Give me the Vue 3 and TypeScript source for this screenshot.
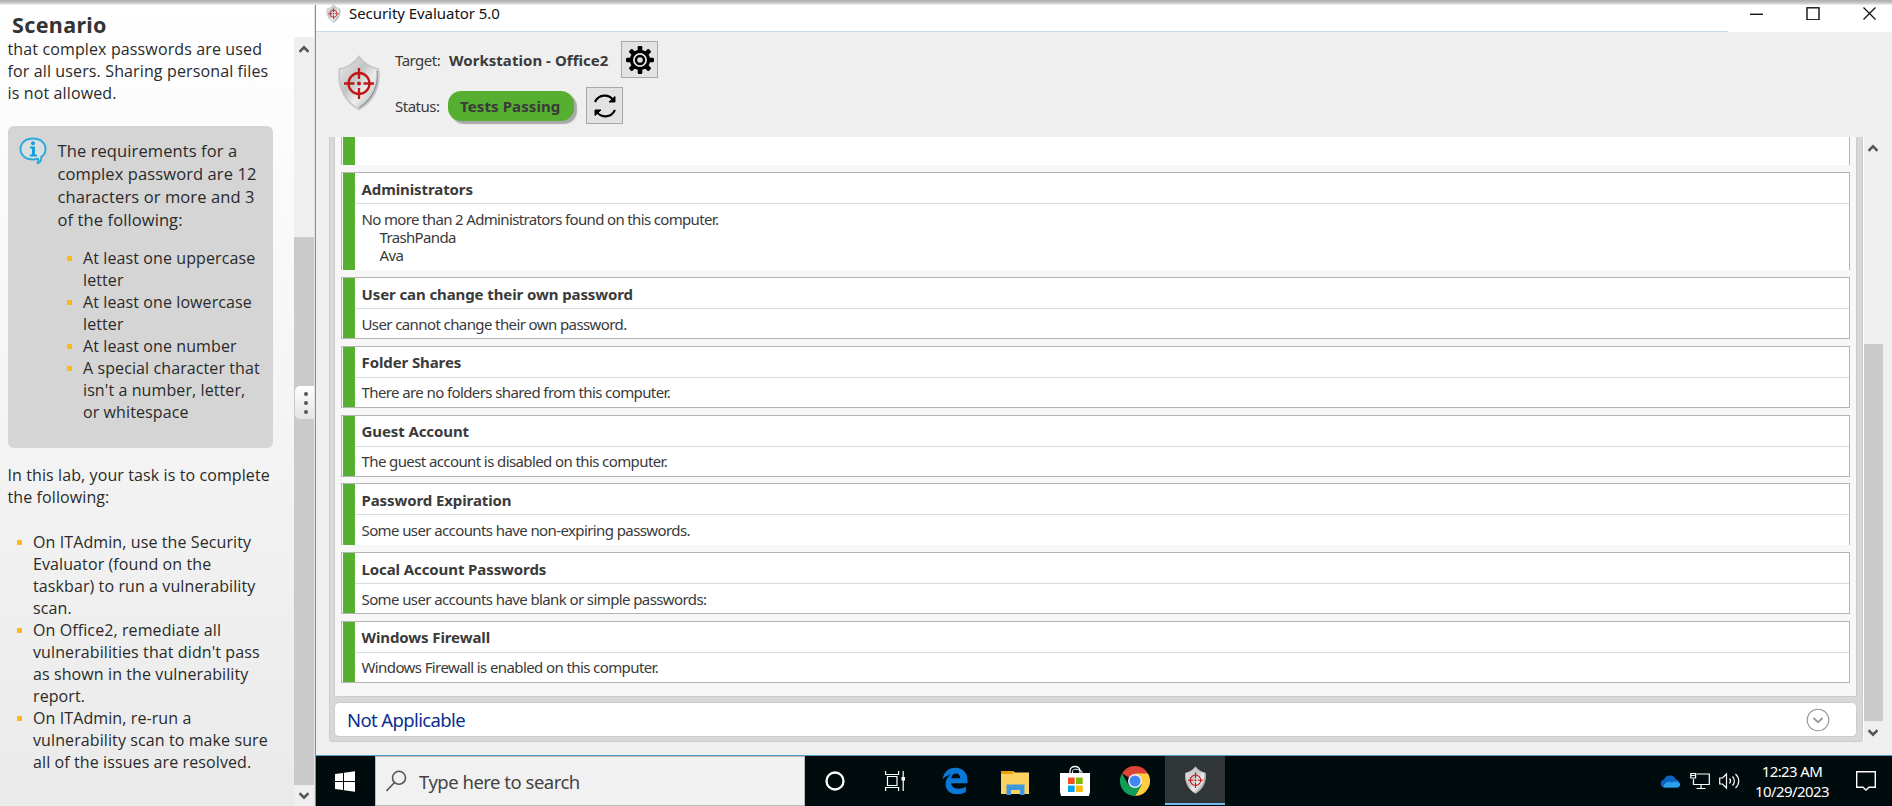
<script setup lang="ts">
interface Result {
  title: string
  lines: string[]
  indented?: string[]
  kind?: string
}

const results: Result[] = [
  {
    title: 'Administrators',
    lines: ['No more than 2 Administrators found on this computer.'],
    indented: ['TrashPanda', 'Ava'],
    kind: 'tall open',
  },
  { title: 'User can change their own password', lines: ['User cannot change their own password.'], kind: 'low' },
  { title: 'Folder Shares', lines: ['There are no folders shared from this computer.'] },
  { title: 'Guest Account', lines: ['The guest account is disabled on this computer.'], kind: 'close' },
  { title: 'Password Expiration', lines: ['Some user accounts have non-expiring passwords.'], kind: 'open low' },
  { title: 'Local Account Passwords', lines: ['Some user accounts have blank or simple passwords:'], kind: 'low' },
  { title: 'Windows Firewall', lines: ['Windows Firewall is enabled on this computer.'] },
]

const rules: string[][] = [
  ['At least one uppercase', 'letter'],
  ['At least one lowercase', 'letter'],
  ['At least one number'],
  ['A special character that', "isn't a number, letter,", 'or whitespace'],
]

const tasks: string[][] = [
  ['On ITAdmin, use the Security', 'Evaluator (found on the', 'taskbar) to run a vulnerability', 'scan.'],
  ['On Office2, remediate all', "vulnerabilities that didn't pass", 'as shown in the vulnerability', 'report.'],
  ['On ITAdmin, re-run a', 'vulnerability scan to make sure', 'all of the issues are resolved.'],
]

const teeth = [0, 45, 90, 135, 180, 225, 270, 315]
</script>

<template>
  <div class="screen">
    <svg width="0" height="0" class="defs">
      <defs>
        <linearGradient id="metal" x1="0" y1="0" x2="1" y2="1">
          <stop offset="0" stop-color="#eeeeee" />
          <stop offset=".4" stop-color="#c3c4c5" />
          <stop offset=".62" stop-color="#ededed" />
          <stop offset="1" stop-color="#9d9ea0" />
        </linearGradient>
        <symbol id="shield" viewBox="0 0 44 56">
          <path d="M22 1.500C18 8 9 13 2.500 14C0 32 8 47 22 54.500C36 47 44 32 41.500 14C35 13 26 8 22 1.500Z" fill="url(#metal)" stroke="#c3c4c6" stroke-width="1.500" />
          <path d="M40 15.500C42 31 35 45 22 52.500" fill="none" stroke="#8d8e92" stroke-width="1.200" />
          <g fill="none" stroke="#c01718" stroke-width="2.300">
            <circle cx="22" cy="28.500" r="10.500" />
            <path d="M22 13v11M22 33v11M7 28.500h10.500M26.500 28.500H37" />
          </g>
          <circle cx="22" cy="28.500" r="2" fill="#c01718" />
        </symbol>
      </defs>
    </svg>
    <div class="topbar"></div>
    <div class="body">
      <aside class="sidebar">
        <div class="doc">
          <h1>Scenario</h1>
          <p class="intro">that complex passwords are used<br />for all users. Sharing personal files<br />is not allowed.</p>
          <section class="note">
            <svg class="info" width="28" height="28" viewBox="0 0 28 28">
              <path d="M14 1.500C6.500 1.500 1.500 6 1.500 12S6.500 22.500 14 22.500c2 0 3.600-.2 5-.8 1 1.700.6 3.300-1 4.800 3-.8 4.700-3 4.200-6.500 2.700-1.800 4.300-4.700 4.300-8C26.500 6 21.500 1.500 14 1.500Z" fill="#dadfe0" stroke="#29a9dc" stroke-width="1.900" />
              <path d="M11 9.500h5v8h2v2h-7v-2h2v-6h-2z" fill="#169fd8" />
              <circle cx="14" cy="6.300" r="2" fill="#169fd8" />
            </svg>
            <div>
              <p class="req">The requirements for a<br />complex password are 12<br />characters or more and 3<br />of the following:</p>
              <ul class="rules">
                <li v-for="(r, i) in rules" :key="i"><div v-for="l in r" :key="l">{{ l }}</div></li>
              </ul>
            </div>
          </section>
          <p class="task">In this lab, your task is to complete<br />the following:</p>
          <ul class="tasks">
            <li v-for="(t, i) in tasks" :key="i"><div v-for="l in t" :key="l">{{ l }}</div></li>
          </ul>
        </div>
        <div class="side-scroll">
          <svg width="10" height="8" viewBox="0 0 10 8"><path d="M.5 6.800 5 2.300l4.500 4.500" fill="none" stroke="#555" stroke-width="2.600" /></svg>
          <div class="side-thumb"><div class="grip"><i></i><i></i><i></i></div></div>
          <svg width="10" height="8" viewBox="0 0 10 8"><path d="M.5 1.200 5 5.700l4.500-4.500" fill="none" stroke="#555" stroke-width="2.600" /></svg>
        </div>
      </aside>

      <main class="desktop">
        <header class="titlebar">
          <svg class="mini" width="15" height="19"><use href="#shield" /></svg>
          <span>Security Evaluator 5.0</span>
          <svg class="controls" width="130" height="14" viewBox="0 0 130 14" fill="none" stroke="#111">
            <path d="M1 8.300h13" stroke-width="1.400" />
            <rect x="58" y="1.800" width="12" height="12" stroke-width="1.400" />
            <path d="m114.500 1.500 12 12m0-12-12 12" stroke-width="1.300" />
          </svg>
        </header>
        <div class="rule"></div>
        <section class="head">
          <svg class="logo" width="44" height="56"><use href="#shield" /></svg>
          <div class="rows">
            <div class="row">
              <span class="label">Target:</span>
              <b class="host">Workstation - Office2</b>
              <button class="tool gear">
                <svg width="28" height="28" viewBox="0 0 28 28">
                  <rect v-for="a in teeth" :key="a" x="11.700" y="0" width="4.600" height="7" rx="1.200" :transform="`rotate(${a} 14 14)`" />
                  <circle cx="14" cy="14" r="8.600" fill="none" stroke="#000" stroke-width="3.200" />
                  <circle cx="14" cy="14" r="4" fill="none" stroke="#000" stroke-width="2.400" />
                </svg>
              </button>
            </div>
            <div class="row second">
              <span class="label">Status:</span>
              <b class="pill">Tests Passing</b>
              <button class="tool">
                <svg width="24" height="26" viewBox="0 0 24 26" fill="none" stroke="#000" stroke-width="2.100">
                  <path d="M2 9C6 .8 16 .8 20.500 7.500" /><path d="M22 3.500v5.500h-6z" fill="#000" stroke-width="1" />
                  <path d="M22 17C18 25.200 8 25.200 3.500 18.500" /><path d="M2 22.500V17h6z" fill="#000" stroke-width="1" />
                </svg>
              </button>
            </div>
          </div>
        </section>

        <section class="report">
          <div class="frame">
            <div class="results">
              <article class="card cut"><div class="bar"></div></article>
              <article v-for="r in results" :key="r.title" class="card" :class="r.kind">
                <div class="bar"></div>
                <div class="info-col">
                  <h2>{{ r.title }}</h2>
                  <div class="detail">
                    <div v-for="l in r.lines" :key="l">{{ l }}</div>
                    <div v-for="l in r.indented" :key="l" class="indent">{{ l }}</div>
                  </div>
                </div>
              </article>
            </div>
            <div class="na">
              <span>Not Applicable</span>
              <svg width="24" height="24" viewBox="0 0 24 24" fill="none" stroke="#999">
                <circle cx="12" cy="12" r="10.800" stroke-width="1.100" />
                <path d="m7.500 10 4.500 4.200 4.500-4.200" stroke-width="1.900" />
              </svg>
            </div>
          </div>
          <div class="main-scroll">
            <svg width="10" height="8" viewBox="0 0 10 8"><path d="M.5 6.800 5 2.300l4.500 4.500" fill="none" stroke="#555" stroke-width="2.600" /></svg>
            <div class="main-thumb"></div>
            <svg width="10" height="8" viewBox="0 0 10 8"><path d="M.5 1.200 5 5.700l4.500-4.500" fill="none" stroke="#555" stroke-width="2.600" /></svg>
          </div>
        </section>

        <footer class="taskbar">
          <div class="start">
            <svg width="20" height="21" viewBox="0 0 20 21" fill="#fff">
              <path d="M0 3 8 2v8H0zM9 1.800 20 .3V10H9zM0 11h8v8l-8-1zM9 11h11v9.700L9 19.200z" />
            </svg>
          </div>
          <div class="search">
            <svg width="21" height="22" viewBox="0 0 21 22" fill="none" stroke="#555" stroke-width="1.600">
              <circle cx="13" cy="7.800" r="6.500" /><path d="m8.500 12.500-8 8.500" />
            </svg>
            <span>Type here to search</span>
          </div>
          <div class="apps">
            <div class="app"><svg width="22" height="22" viewBox="0 0 22 22"><circle cx="11" cy="11" r="8.500" fill="none" stroke="#fff" stroke-width="2.300" /></svg></div>
            <div class="app">
              <svg width="20" height="20" viewBox="0 0 20 20" fill="none" stroke="#fff" stroke-width="1.200">
                <path d="M.6 0v3.500h13V0M.6 20v-3.500h13V20M2.500 5.500h9.500v9H2.500zM18.200 0v20" /><rect x="16.500" y="6" width="3.500" height="3.500" fill="#fff" stroke="none" />
              </svg>
            </div>
            <div class="app">
              <svg width="26" height="28" viewBox="0 0 26 28">
                <path d="M.7 12.500C1.500 5 6.500.7 13.500.7c7.300 0 12 5.300 12 12v3.600H9.200c.4 4 3.400 5.400 7.300 5.400 2.800 0 5.200-.8 7.400-2v5.400c-2.700 1.500-5.500 2.200-8.900 2.200-7 0-11.400-4.300-11.400-10 0-4.400 2.200-8 5.700-9.900C5.700 8 2.800 9.500.7 12.500Zm8.600-1.300h8.800c0-3-1.400-4.700-4.200-4.700-2.500 0-4.200 2-4.600 4.700Z" fill="#0a78d7" fill-rule="evenodd" />
              </svg>
            </div>
            <div class="app">
              <svg class="files" width="30" height="26" viewBox="0 0 30 26">
                <path d="M1 1h12l2 1.500h14V24H1z" fill="#fbd262" /><path d="M1 1h12v3H1z" fill="#e3a008" /><path d="M6.500 25V14.500h18V25H20v-5h-9v5z" fill="#3d97dc" />
              </svg>
            </div>
            <div class="app">
              <svg width="30" height="32" viewBox="0 0 30 32">
                <path d="M10 9V6c0-6 10-6 10 0v3" fill="none" stroke="#fff" stroke-width="1.300" /><path d="M12.500 9V6.500c0-3 5.500-3 9.500 0V9" fill="none" stroke="#fff" stroke-width="1" />
                <path d="M0 8h30v19l-1 4H1l-1-4z" fill="#fff" />
                <path d="M8 12.500h6.700v6.500H8z" fill="#f25022" /><path d="M16 12.500h6.700v6.500H16z" fill="#7fba00" /><path d="M8 20.500h6.700V27H8z" fill="#00a4ef" /><path d="M16 20.500h6.700V27H16z" fill="#ffb900" />
              </svg>
            </div>
            <div class="app">
              <svg width="30" height="30" viewBox="0 0 30 30">
                <path d="M15 15 2 7.500A15 15 0 0 1 28 7.500z" fill="#db4437" />
                <path d="M15 7.500H28A15 15 0 0 1 15 30l6.500-11.200z" fill="#ffcd40" />
                <path d="M2 7.500A15 15 0 0 0 15 30l6.500-11.200L15 22l-6.500-3.200z" fill="#0f9d58" />
                <circle cx="15" cy="15" r="7" fill="#f1f1f1" /><circle cx="15" cy="15" r="5.500" fill="#4285f4" />
              </svg>
            </div>
            <div class="app active"><svg width="23" height="28"><use href="#shield" /></svg></div>
          </div>
          <div class="tray">
            <svg width="21" height="13" viewBox="0 0 21 13">
              <path d="M4.500 12.500A4 4 0 0 1 4 4.600 6.500 6.500 0 0 1 16 4.500a4.200 4.200 0 0 1 .5 8z" fill="#0b64c0" />
              <path d="M3 11.500C5 7 9 5.500 12 7.500c2-1.500 6-1.500 8 1 .5 2-.5 4-3 4H5c-1 0-1.700-.4-2-1z" fill="#28a0ea" />
            </svg>
            <svg class="net" width="20" height="18" viewBox="0 0 20 18" fill="none" stroke="#fff" stroke-width="1.200">
              <path d="M6.500 2H19.300v10.500H3.500V7M11 12.500v4M6.500 16.500h9" /><path d="M.8 1.500h4.800v4.500H.8zM.8 3.500h4.800" />
            </svg>
            <svg class="vol" width="21" height="18" viewBox="0 0 21 18" fill="none" stroke="#fff" stroke-width="1.200">
              <path d="M.7 6h2.800l4-4v14l-4-4H.700zM10.500 6.500c1.300 1.500 1.300 3.500 0 5M13.500 4.500c2.500 2.500 2.500 6.500 0 9M16.500 2c4.300 4 4.300 10 0 14" />
            </svg>
            <div class="clock"><div>12:23 AM</div><div>10/29/2023</div></div>
            <svg class="notice" width="20" height="20" viewBox="0 0 20 20" fill="none" stroke="#fff" stroke-width="1.400">
              <path d="M.7.700h18.600v15.600H13l-3 2.700-3-2.700H.7z" />
            </svg>
          </div>
        </footer>
      </main>
    </div>
  </div>
</template>

<style>
body { margin: 0; overflow: hidden; }
</style>

<style scoped>
.screen { width: 1892px; height: 806px; overflow: hidden; display: flex; flex-direction: column; font-family: "Noto Sans", "Open Sans", sans-serif; color: #3a3a3a; background: #fff; }
.defs { position: absolute; }
svg { display: block; flex: none; }
h1, h2, p, ul { margin: 0; padding: 0; }
li { list-style: none; }
div, span, b, h1, h2, p { white-space: nowrap; }
.topbar { height: 5px; flex: none; background: linear-gradient(#adadad, #c4c4c4 50%, #f2f2f2); }
.body { flex: 1; min-height: 0; display: flex; }
.sidebar { width: 315px; box-sizing: border-box; border-right: 1px solid #e4e4e4; display: flex; background: linear-gradient(#fff, #eaeaea); }
.doc { width: 294px; box-sizing: border-box; padding-left: 8px; font-family: "Open Sans", sans-serif; font-size: 16px; line-height: 22px; letter-spacing: .1px; color: #2a2a2a; }
h1 { font: bold 21.500px/28px "Noto Sans", sans-serif; padding: 6px 0 0 4px; color: #333; height: 27px; letter-spacing: .35px; }
.intro { height: 88px; margin-left: -.5px; letter-spacing: .13px; }
.note { width: 265px; height: 322px; box-sizing: border-box; border-radius: 6px; background: #d5d5d5; display: flex; padding: 11px 0 0 11px; }
.note .info { margin-right: 11px; }
.req { font-size: 16.500px; line-height: 23px; padding-top: 2px; margin-left: -.5px; }
.rules { padding: 16px 0 0 25px; }
.rules li, .tasks li { position: relative; }
.rules li::before, .tasks li::before { content: ""; position: absolute; left: -16px; top: 9px; width: 5px; height: 5px; background: #fbb917; }
.task { padding-top: 16px; margin-left: -.5px; }
.tasks { padding: 23px 0 0 25px; }
.side-scroll { width: 20px; margin-top: 32px; background: #efefef; display: flex; flex-direction: column; align-items: center; padding: 8px 0 6px; box-sizing: border-box; justify-content: space-between; }
.side-thumb { width: 20px; height: 548px; margin-top: 177px; background: #cacaca; box-sizing: border-box; padding-top: 149px; }
.grip { width: 19px; height: 33px; margin-left: 1px; border-radius: 5px 0 0 5px; background: linear-gradient(#fff, #e4e4e4); display: flex; flex-direction: column; align-items: center; justify-content: center; gap: 5px; padding-left: 3px; box-sizing: border-box; }
.grip i { width: 4px; height: 4px; border-radius: 50%; background: #555; }
.desktop { flex: 1; min-width: 0; border-left: 1px solid #5d97c2; display: flex; flex-direction: column; background: #efefef; }
.titlebar { height: 26px; background: #fff; display: flex; color: #111; }
.mini { margin: -1px 0 0 10px; }
.titlebar span { font-size: 15px; line-height: 18px; margin: -1px 0 0 8px; letter-spacing: -.05px; color: #111; }
.controls { margin: 1px 13px 0 auto; }
.rule { height: 1px; flex: none; background: linear-gradient(90deg, #c5dce6 0 1412px, #fff 1412px); }
.head { height: 105px; display: flex; font-size: 15px; flex: none; }
.logo { margin: 23px 0 0 21px; }
.rows { margin-left: 14px; padding-top: 9px; }
.row { display: flex; align-items: center; height: 37px; }
.row.second { margin-top: 9px; }
.label { width: 54px; letter-spacing: -.5px; }
.host { width: 172px; letter-spacing: .04px; }
.tool { width: 37px; height: 37px; padding: 0; border: 1px solid #a8a8a8; background: #e2e2e2; display: flex; align-items: center; justify-content: center; }
.pill { width: 126px; height: 30px; box-sizing: border-box; padding-left: 12px; line-height: 31px; letter-spacing: .1px; background: #56af31; border-radius: 13px; box-shadow: 3px 3px 1px #a8a8a8; margin: 0 12px 0 -1px; }
.report { display: flex; flex: none; height: 605px; padding-left: 13px; }
.frame { width: 1534px; height: 605px; box-sizing: border-box; background: #d8d8d8; border: 1px solid #ccc; border-top: 0; border-radius: 0 0 4px 4px; padding: 0 5px 0 4px; }
.results { height: 560px; box-sizing: border-box; border: 1px solid #ccc; border-top: 0; background: #f7f7f7; padding-left: 6px; display: flex; flex-direction: column; }
.card { width: 1509px; height: 62px; flex: none; margin-bottom: 7px; box-sizing: border-box; border: 1px solid #b4b4b4; background: #fff; display: flex; padding-left: 1px; }
.card.cut { height: 28px; border-top: 0; border-bottom: 0; }
.card.tall { height: 98px; }
.card.open { border-bottom: 0; }
.card.close { margin-bottom: 6px; }
.bar { width: 12px; background: #56af31; }
.info-col { flex: 1; }
h2 { font-size: 15px; line-height: 30px; height: 30px; letter-spacing: -.1px; padding-left: 6.500px; border-bottom: 1px solid #dadada; }
.tall h2, .low h2 { line-height: 32px; }
.detail { font-size: 15px; line-height: 18px; padding: 5px 0 0 6.500px; letter-spacing: -.6px; }
.tall .detail { padding-top: 6px; letter-spacing: -.65px; }
.low .detail { padding-top: 6px; }
.indent { padding-left: 18px; }
.na { margin-top: 5px; height: 35px; box-sizing: border-box; background: #fff; border: 1px solid #ccc; border-radius: 5px; display: flex; align-items: center; justify-content: space-between; padding: 0 26px 0 12px; color: #0a2f91; font-size: 18.500px; letter-spacing: -.62px; }
.main-scroll { width: 19px; margin-left: 0; border-left: 1px solid #fff; display: flex; flex-direction: column; align-items: center; height: 604px; box-sizing: border-box; padding: 7px 0 4px; justify-content: space-between; }
.main-thumb { width: 19px; height: 377px; margin-top: 183px; background: #cacaca; }
.taskbar { height: 51px; flex: none; box-sizing: border-box; border-top: 1px solid #4f9cc4; background: #000b0e; display: flex; margin-top: 13px; }
.start { width: 58px; padding-right: 1px; display: flex; align-items: center; justify-content: center; }
.search { width: 430px; box-sizing: border-box; border: 1px solid #bbb; background: #f1f1f1; display: flex; align-items: center; padding-left: 10px; font-size: 18.500px; color: #444; }
.search span { margin-left: 12px; letter-spacing: -.5px; }
.apps { display: flex; }
.app { width: 60px; display: flex; align-items: center; justify-content: center; }
.app.active { background: #303538; border-bottom: 2px solid #76b9ed; height: 47px; }
.files { margin-top: 4px; }
.tray { margin-left: auto; display: flex; align-items: center; color: #fff; padding-right: 16px; }
.net { margin-left: 9px; }
.vol { margin-left: 9px; }
.clock { width: 104px; margin-right: 12px; text-align: center; font-size: 15px; line-height: 20px; letter-spacing: -.6px; }
</style>
